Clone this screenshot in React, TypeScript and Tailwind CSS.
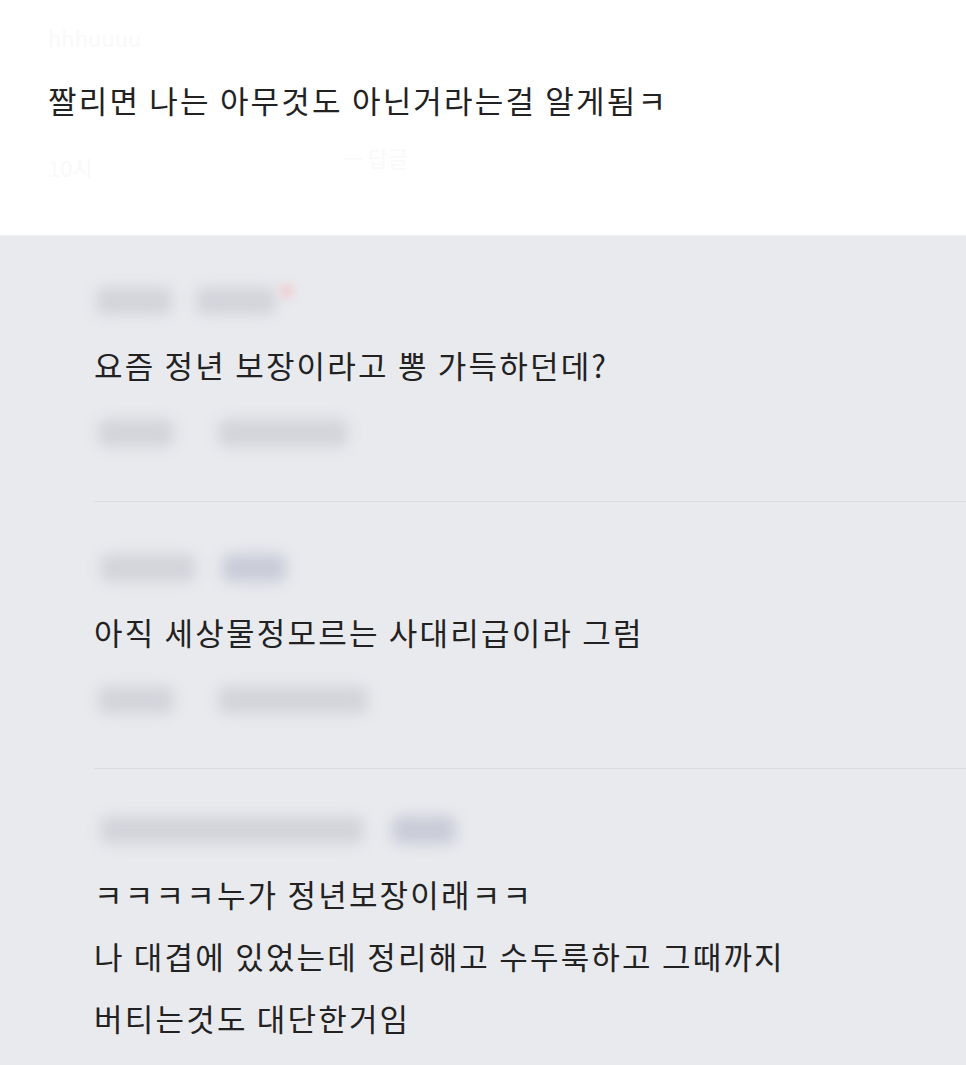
import React from "react";

const font = {
  fontFamily: '"Noto Sans CJK KR", "Noto Sans", sans-serif',
};

type Blob = { w: number; ml: number; tone?: "grey" | "blue" };

function BlurRow({ blobs, dot }: { blobs: Blob[]; dot?: boolean }) {
  return (
    <div className="flex h-[66px] items-center">
      {blobs.map((b, i) => (
        <div
          key={i}
          className={
            b.tone === "blue"
              ? "h-[28px] rounded-lg bg-[#c9cbd8] blur-[7px]"
              : "h-[28px] rounded-lg bg-[#d3d4da] blur-[7px]"
          }
          style={{ width: b.w, marginLeft: b.ml }}
        />
      ))}
      {dot && (
        <div className="-mt-5 ml-1 h-[14px] w-[14px] rounded-full bg-[#f0cdd1] blur-[5px]" />
      )}
    </div>
  );
}

function Comment({
  head,
  meta,
  lines,
  dot,
  last,
  top,
}: {
  head: Blob[];
  meta?: Blob[];
  lines: string[];
  dot?: boolean;
  last?: boolean;
  top: string;
}) {
  return (
    <div className={last ? top : top + " border-b border-[#dcdde2]"}>
      <BlurRow blobs={head} dot={dot} />
      <div className="text-[31px] leading-[62px] tracking-[2.2px] text-[#222222]">
        {lines.map((l, i) => (
          <p key={i}>{l}</p>
        ))}
      </div>
      {meta && (
        <div className="pt-[4px] pb-[35px]">
          <BlurRow blobs={meta} />
        </div>
      )}
    </div>
  );
}

export default function App() {
  return (
    <div className="min-h-[1065px] w-[966px] overflow-hidden bg-[#e9eaee]" style={font}>
      <div className="h-[236px] border-b border-[#f1f2f4] bg-white px-[48px]">
        <div className="h-[60px] pt-[22px] text-[22px] leading-[30px] text-[#f9f9f9]">
          hhhuuuu
        </div>
        <p className="text-[31px] leading-[80px] tracking-[2.2px] text-[#222222]">
          짤리면 나는 아무것도 아닌거라는걸 알게됨ㅋ
        </p>
        <div className="flex items-center pt-[12px] text-[22px] leading-[30px] text-[#f9f9f9]">
          <span>10시</span>
          <span className="ml-[250px] -mt-[20px]">ㅡ 답글</span>
        </div>
      </div>

      <div className="pl-[94px]">
        <Comment
          top="pt-[32px]"
          head={[
            { w: 76, ml: 2 },
            { w: 80, ml: 24 },
          ]}
          dot
          lines={["요즘 정년 보장이라고 뽕 가득하던데?"]}
          meta={[
            { w: 76, ml: 4 },
            { w: 130, ml: 44 },
          ]}
        />
        <Comment
          top="pt-[33px]"
          head={[
            { w: 96, ml: 6 },
            { w: 64, ml: 26, tone: "blue" },
          ]}
          lines={["아직 세상물정모르는 사대리급이라 그럼"]}
          meta={[
            { w: 76, ml: 4 },
            { w: 150, ml: 44 },
          ]}
        />
        <Comment
          top="pt-[28px]"
          head={[
            { w: 264, ml: 6 },
            { w: 64, ml: 28, tone: "blue" },
          ]}
          lines={[
            "ㅋㅋㅋㅋ누가 정년보장이래ㅋㅋ",
            "나 대겹에 있었는데 정리해고 수두룩하고 그때까지",
            "버티는것도 대단한거임",
          ]}
          last
        />
      </div>
    </div>
  );
}
